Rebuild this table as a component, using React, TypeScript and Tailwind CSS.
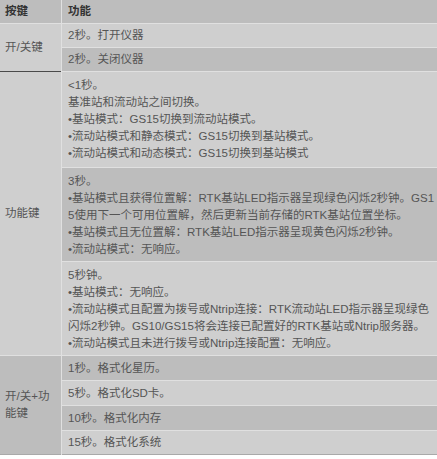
type Row = { lines: string[]; bg: string; pad: string };
type Group = { keyLines: string[]; keyBg: string; keyBorder: string; rows: Row[] };

const groups: Group[] = [
  {
    keyLines: ['开/关键'],
    keyBg: 'bg-[#cfcfcf]',
    keyBorder: 'border-[#4a4a4a]',
    rows: [
      { lines: ['2秒。打开仪器'], bg: 'bg-[#cfcfcf]', pad: 'py-[3px]' },
      { lines: ['2秒。关闭仪器'], bg: 'bg-[#bdbdbd]', pad: 'py-[3px]' },
    ],
  },
  {
    keyLines: ['功能键'],
    keyBg: 'bg-[#cfcfcf]',
    keyBorder: 'border-[#e0e0e0]',
    rows: [
      {
        lines: [
          '<1秒。',
          '基准站和流动站之间切换。',
          '•基站模式：GS15切换到流动站模式。',
          '•流动站模式和静态模式：GS15切换到基站模式。',
          '•流动站模式和动态模式：GS15切换到基站模式',
        ],
        bg: 'bg-[#cfcfcf]',
        pad: 'pt-[5px] pb-[5px]',
      },
      {
        lines: [
          '3秒。',
          '•基站模式且获得位置解：RTK基站LED指示器呈现绿色闪烁2秒钟。GS1',
          '5使用下一个可用位置解，然后更新当前存储的RTK基站位置坐标。',
          '•基站模式且无位置解：RTK基站LED指示器呈现黄色闪烁2秒钟。',
          '•流动站模式：无响应。',
        ],
        bg: 'bg-[#bdbdbd]',
        pad: 'pt-[5px] pb-[3px]',
      },
      {
        lines: [
          '5秒钟。',
          '•基站模式：无响应。',
          '•流动站模式且配置为拨号或Ntrip连接：RTK流动站LED指示器呈现绿色',
          '闪烁2秒钟。GS10/GS15将会连接已配置好的RTK基站或Ntrip服务器。',
          '•流动站模式且未进行拨号或Ntrip连接配置：无响应。',
        ],
        bg: 'bg-[#cfcfcf]',
        pad: 'pt-[5px] pb-[3px]',
      },
    ],
  },
  {
    keyLines: ['开/关+功', '能键'],
    keyBg: 'bg-[#bdbdbd]',
    keyBorder: 'border-[#a9a9a9]',
    rows: [
      { lines: ['1秒。格式化星历。'], bg: 'bg-[#bdbdbd]', pad: 'py-[3.5px]' },
      { lines: ['5秒。格式化SD卡。'], bg: 'bg-[#cfcfcf]', pad: 'py-[3.5px]' },
      { lines: ['10秒。格式化内存'], bg: 'bg-[#bdbdbd]', pad: 'py-[3.5px]' },
      { lines: ['15秒。格式化系统'], bg: 'bg-[#cfcfcf]', pad: 'py-[3px]' },
    ],
  },
];

export default function App() {
  return (
    <div className="w-[437px] h-[459px] bg-white overflow-hidden font-['Liberation_Sans','Noto_Sans_CJK_SC',sans-serif] text-[11.5px] leading-[17px] text-[#555555]">
      {/* Header */}
      <div className="flex bg-[#bdbdbd] border-b border-[#e0e0e0] font-bold text-[#333333]">
        <div className="w-[61px] px-[5px] py-[3px]">按键</div>
        <div className="flex-1 border-l border-[#e0e0e0] px-[6px] py-[3px]">功能</div>
      </div>

      {groups.map((g, gi) => (
        <div key={gi} className="flex">
          <div className={`w-[61px] shrink-0 flex flex-col justify-center px-[5px] border-b ${g.keyBg} ${g.keyBorder}`}>
            {g.keyLines.map((l) => (
              <div key={l} className="whitespace-nowrap">{l}</div>
            ))}
          </div>
          <div className="flex-1 flex flex-col border-l border-[#e0e0e0]">
            {g.rows.map((r, ri) => (
              <div
                key={ri}
                className={`px-[6px] border-b ${r.bg} ${r.pad} ${
                  gi === groups.length - 1 && ri === g.rows.length - 1 ? 'border-[#a9a9a9]' : 'border-[#e0e0e0]'
                }`}
              >
                {r.lines.map((l, li) => (
                  <div key={li} className="whitespace-nowrap">{l}</div>
                ))}
              </div>
            ))}
          </div>
        </div>
      ))}
    </div>
  );
}
